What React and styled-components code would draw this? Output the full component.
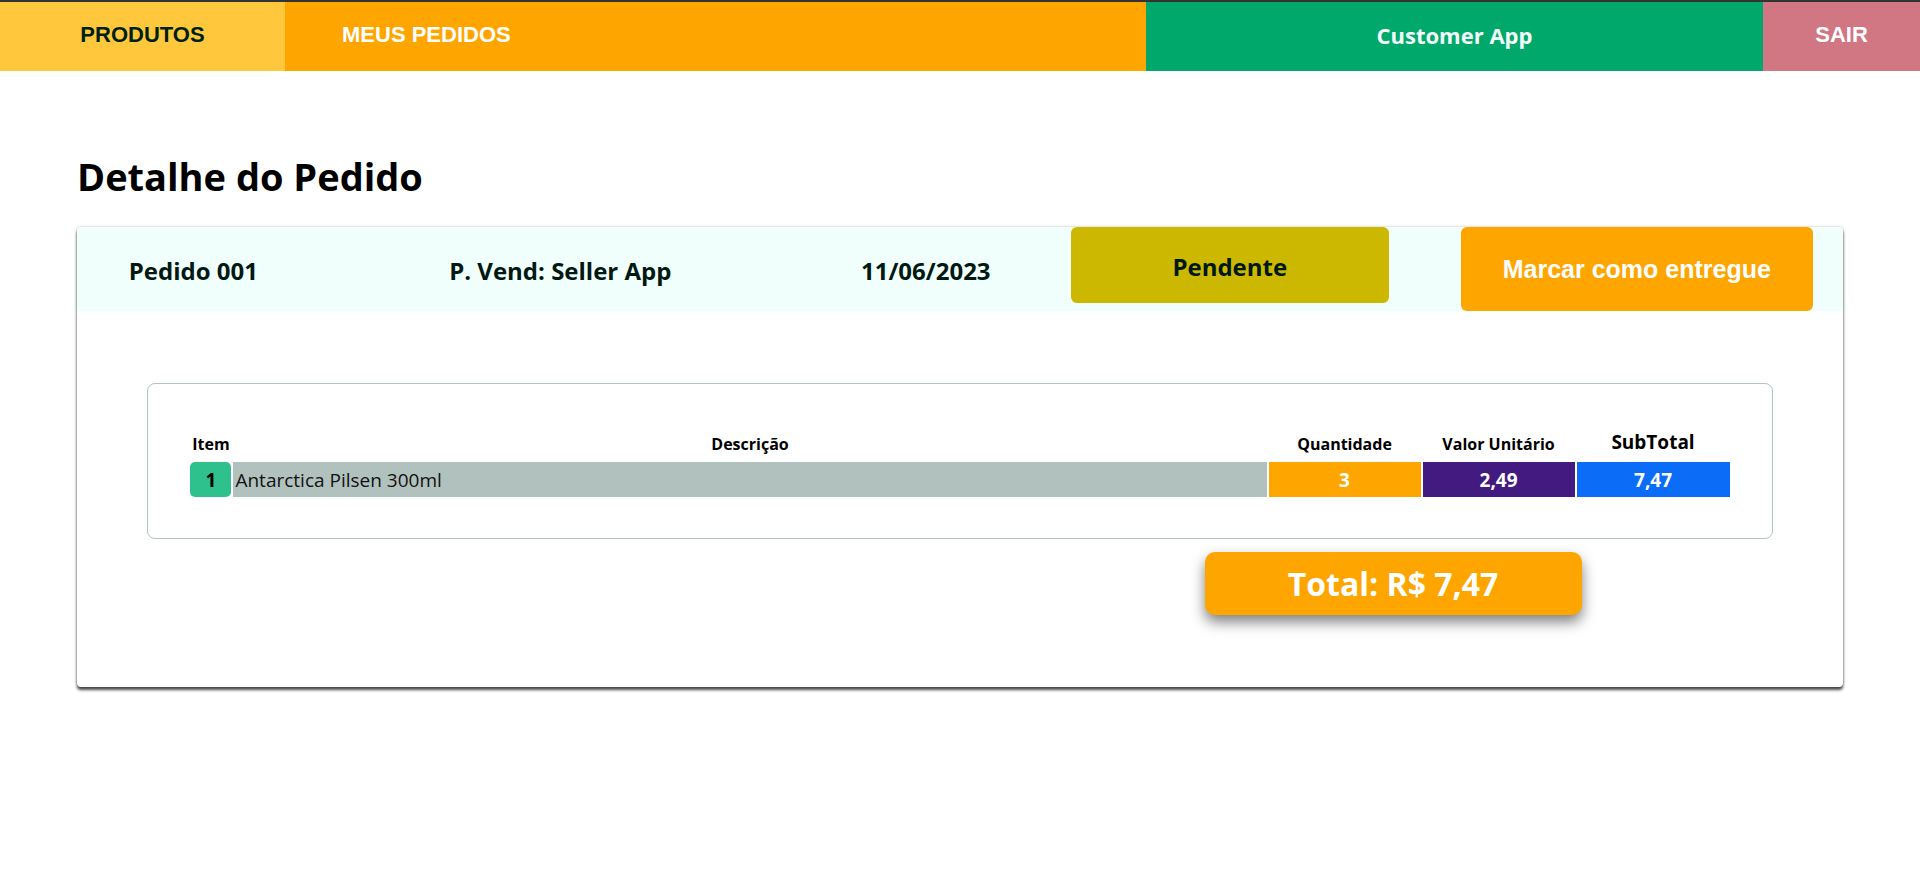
import React from 'react'
import styled, { createGlobalStyle } from 'styled-components'

const GlobalStyle = createGlobalStyle`
  * { box-sizing: border-box; }
  body {
    margin: 0;
    background: #fff;
    font-family: 'Open Sans', sans-serif;
  }
`

const Nav = styled.nav`
  display: flex;
  height: 71px;
  border-top: 2px solid #333;
`

const NavItem = styled.div`
  display: flex;
  align-items: center;
  justify-content: ${(p) => (p.$left ? 'flex-start' : 'center')};
  width: ${(p) => p.$width || 'auto'};
  flex: ${(p) => (p.$grow ? 1 : 'none')};
  padding: ${(p) => (p.$left ? '0 0 3px 57px' : '0 0 3px 0')};
  background: ${(p) => p.$bg};
  color: ${(p) => p.$color || '#fff'};
  font-family: ${(p) => (p.$sans ? "'Open Sans', sans-serif" : "'Liberation Sans', Arial, sans-serif")};
  font-size: 22px;
  font-weight: 700;
  cursor: pointer;
`

const Title = styled.h1`
  margin: 79px 0 24px 77px;
  font-size: 38px;
  line-height: 53px;
  font-weight: 700;
  color: #000;
`

const Card = styled.section`
  position: relative;
  width: 92%;
  margin: 0 auto 40px;
  padding-bottom: 72px;
  border-radius: 4px;
  background: #fff;
  box-shadow: 0 3px 3px rgba(0, 0, 0, 0.7), 0 0 3px rgba(0, 0, 0, 0.25);
`

const CardHeader = styled.div`
  display: flex;
  align-items: center;
  height: 84px;
  border-radius: 4px 4px 0 0;
  background: #f0fffb;
`

const InfoCell = styled.div`
  width: ${(p) => p.$width}px;
  text-align: center;
  font-size: 24px;
  font-weight: 700;
  color: #001812;
  padding-top: 3px;
`

const StatusBadge = styled.div`
  align-self: flex-start;
  display: flex;
  align-items: center;
  justify-content: center;
  width: 318px;
  height: 76px;
  margin-left: 30px;
  padding-top: 3px;
  border-radius: 6px;
  background: #ccb800;
  color: #001812;
  font-size: 24px;
  font-weight: 700;
`

const DeliverButton = styled.button`
  width: 352px;
  height: 84px;
  margin-left: 72px;
  border: none;
  border-radius: 6px;
  background: #ffa500;
  color: #fff;
  font-family: 'Liberation Sans', Arial, sans-serif;
  font-size: 25px;
  font-weight: 700;
  cursor: pointer;
`

const TableBox = styled.div`
  width: 92%;
  margin: 72px auto 0;
  padding: 41px 42px;
  border: 1px solid #b3c3bf;
  border-radius: 8px;
`

const Grid = styled.div`
  display: grid;
  grid-template-columns: 41px 1fr 152px 152px 153px;
  grid-template-rows: 35px 35px;
  gap: 2px;
`

const HeadCell = styled.div`
  align-self: end;
  padding-bottom: 6px;
  text-align: center;
  font-size: ${(p) => p.$size || 16}px;
  line-height: ${(p) => (p.$size ? 24 : 20)}px;
  font-weight: 700;
  color: #000;
  white-space: nowrap;
`

const ItemBadge = styled.div`
  display: flex;
  align-items: center;
  justify-content: center;
  border-radius: 5px;
  background: #2fc18d;
  color: #000;
  font-size: 19px;
  font-weight: 700;
`

const DescCell = styled.div`
  display: flex;
  align-items: center;
  padding-left: 2px;
  background: #b1c1bd;
  color: #111;
  font-size: 19px;
`

const ValueCell = styled.div`
  display: flex;
  align-items: center;
  justify-content: center;
  background: ${(p) => p.$bg};
  color: #fff;
  font-size: 19px;
  font-weight: 700;
`

const TotalRow = styled.div`
  display: flex;
  justify-content: flex-end;
  width: 92%;
  margin: 13px auto 0;
  padding-right: 191px;
`

const TotalBox = styled.div`
  display: flex;
  align-items: center;
  justify-content: center;
  width: 377px;
  height: 63px;
  border-radius: 10px;
  background: #ffa500;
  box-shadow: 0 7px 14px rgba(0, 0, 0, 0.5);
  color: #fff;
  font-size: 32px;
  font-weight: 700;
`

const order = {
  id: '001',
  seller: 'Seller App',
  date: '11/06/2023',
  status: 'Pendente',
  items: [{ name: 'Antarctica Pilsen 300ml', qty: 3, price: '2,49', subtotal: '7,47' }],
  total: '7,47',
}

export default function App() {
  return (
    <>
      <GlobalStyle />
      <Nav>
        <NavItem $width="285px" $bg="#ffc73b" $color="#001f12">PRODUTOS</NavItem>
        <NavItem $grow $left $bg="#ffa500">MEUS PEDIDOS</NavItem>
        <NavItem $width="617px" $bg="#00a86b" $color="#f4fff9" $sans>Customer App</NavItem>
        <NavItem $width="157px" $bg="#d17683">SAIR</NavItem>
      </Nav>

      <Title>Detalhe do Pedido</Title>

      <Card>
        <CardHeader>
          <InfoCell $width={233}>Pedido {order.id}</InfoCell>
          <InfoCell $width={501}>P. Vend: {order.seller}</InfoCell>
          <InfoCell $width={230}>{order.date}</InfoCell>
          <StatusBadge>{order.status}</StatusBadge>
          <DeliverButton>Marcar como entregue</DeliverButton>
        </CardHeader>

        <TableBox>
          <Grid>
            <HeadCell>Item</HeadCell>
            <HeadCell>Descrição</HeadCell>
            <HeadCell>Quantidade</HeadCell>
            <HeadCell>Valor Unitário</HeadCell>
            <HeadCell $size={19}>SubTotal</HeadCell>
            {order.items.map((it, i) => (
              <React.Fragment key={i}>
                <ItemBadge>{i + 1}</ItemBadge>
                <DescCell>{it.name}</DescCell>
                <ValueCell $bg="#ffa500">{it.qty}</ValueCell>
                <ValueCell $bg="#421a80">{it.price}</ValueCell>
                <ValueCell $bg="#0a6cf7">{it.subtotal}</ValueCell>
              </React.Fragment>
            ))}
          </Grid>
        </TableBox>

        <TotalRow>
          <TotalBox>Total: R$ {order.total}</TotalBox>
        </TotalRow>
      </Card>
    </>
  )
}
